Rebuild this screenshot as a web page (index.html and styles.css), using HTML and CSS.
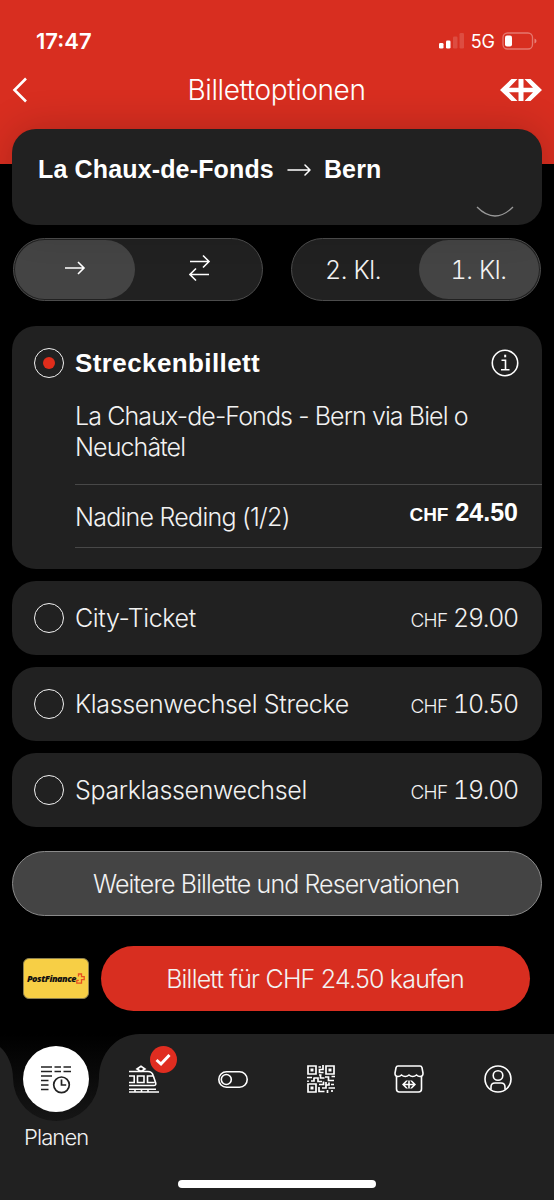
FILE: index.html
```html
<!DOCTYPE html>
<html lang="de">
<head>
    <meta charset="UTF-8">
    <meta name="viewport" content="width=device-width, initial-scale=1.0">
    <title>Billettoptionen</title>
    <link rel="stylesheet" href="styles.css">
</head>
<body>

<div class="screen">

    <header class="header">
        <div class="status">
            <span class="time">17:47</span>
            <div class="status-icons">
                <svg width="26" height="16" viewBox="0 0 26 16" fill="#fff">
                    <rect x="0" y="10" width="4.500" height="5.500" rx="1.300"/>
                    <rect x="7" y="7.500" width="4.500" height="8" rx="1.300"/>
                    <rect x="14" y="3.500" width="4.500" height="12" rx="1.300" opacity=".15"/>
                    <rect x="20.500" y="0" width="4.500" height="15.500" rx="1.300" opacity=".15"/>
                </svg>
                <span class="network">5G</span>
                <svg width="35" height="18" viewBox="0 0 35 18">
                    <rect x="1" y="1" width="29.500" height="16" rx="4.500" fill="none" stroke="#fff" stroke-opacity=".35" stroke-width="1.300"/>
                    <rect x="3" y="3.500" width="7" height="11" rx="2" fill="#fff"/>
                    <path d="M32.500 6.500q2 .8 2 2.500t-2 2.500z" fill="#fff" opacity=".4"/>
                </svg>
            </div>
        </div>
        <div class="titlebar">
            <svg class="back" width="16" height="26" viewBox="0 0 16 26" fill="none" stroke="#fff" stroke-width="2.600">
                <path d="M15 1.500 3.500 13 15 24.500"/>
            </svg>
            <h1>Billettoptionen</h1>
            <svg width="42" height="22" viewBox="0 0 42 22" fill="#fff">
                <path d="M0 11 11.500 0h6l-8.500 8.700h9.500V0h5v8.700H33L24.500 0h6L42 11 30.500 22h-6l8.500-8.700h-9.500V22h-5v-8.700H9L17.500 22h-6z"/>
            </svg>
        </div>
    </header>

    <div class="route">
        <b>La Chaux-de-Fonds</b>
        <svg width="24" height="12" viewBox="0 0 24 12" fill="none" stroke="#fff" stroke-width="1.500" stroke-linecap="round" stroke-linejoin="round">
            <path d="M1 6h22M18 1l5 5-5 5"/>
        </svg>
        <b>Bern</b>
        <svg class="scrolled-icon" width="40" height="12" viewBox="0 0 40 12" fill="none" stroke="#999" stroke-width="1.300">
            <path d="M2 1q18 18 36 0"/>
        </svg>
    </div>

    <div class="switches">
        <div class="switch">
            <div class="option selected">
                <svg width="22" height="14" viewBox="0 0 22 14" class="line-icon">
                    <path d="M1 7h19M14 1l6 6-6 6"/>
                </svg>
            </div>
            <div class="option return">
                <svg width="22" height="28" viewBox="0 0 22 28" class="line-icon">
                    <path d="M1 7.500h19M14 1.500l6 6-6 6M20 20.500H1M7 14.500l-6 6 6 6"/>
                </svg>
            </div>
        </div>
        <div class="switch">
            <div class="option">2. Kl.</div>
            <div class="option selected">1. Kl.</div>
        </div>
    </div>

    <main class="tickets">
        <section class="ticket open">
            <div class="ticket-head">
                <span class="radio checked"></span>
                <h2>Streckenbillett</h2>
                <svg class="info" width="28" height="28" viewBox="0 0 28 28" fill="none" stroke="#fff" stroke-width="1.600">
                    <circle cx="14" cy="14" r="12.700"/>
                    <path d="M10.500 11.300h4v9.200M10 20.700h8.500"/>
                    <path d="M14.200 5.700v2.600" stroke-width="2"/>
                </svg>
            </div>
            <p>La Chaux-de-Fonds - Bern via Biel o<br>Neuchâtel</p>
            <div class="traveller">
                <span class="person">Nadine Reding (1/2)</span>
                <span class="price"><small>CHF</small> 24.50</span>
            </div>
        </section>

        <section class="ticket">
            <span class="radio"></span>
            <span class="name">City-Ticket</span>
            <span class="price"><small>CHF</small> 29.00</span>
        </section>
        <section class="ticket">
            <span class="radio"></span>
            <span class="name">Klassenwechsel Strecke</span>
            <span class="price"><small>CHF</small> 10.50</span>
        </section>
        <section class="ticket">
            <span class="radio"></span>
            <span class="name">Sparklassenwechsel</span>
            <span class="price"><small>CHF</small> 19.00</span>
        </section>
    </main>

    <button class="more">Weitere Billette und Reservationen</button>

    <div class="pay">
        <div class="card-logo">
            <span>PostFinance</span>
            <svg width="9" height="11" viewBox="0 0 9 11" fill="none" stroke="#e8501f" stroke-width="1.300">
                <path d="M2.500 3.500V1h3v2.700h2.700v3H5.500v3.500H.8V7.300h2"/>
            </svg>
        </div>
        <button class="buy">Billett für CHF 24.50 kaufen</button>
    </div>

    <nav class="tabbar">
        <svg class="tabbar-shape" width="554" height="166" viewBox="0 0 554 166">
            <defs>
                <linearGradient id="notch" x1="0" y1="0" x2="0" y2="1">
                    <stop offset="0" stop-color="#000"/>
                    <stop offset=".45" stop-color="#090909"/>
                    <stop offset="1" stop-color="#161616"/>
                </linearGradient>
            </defs>
            <path fill="url(#notch)" d="M0 0h140v87H0z"/>
            <path fill="#212121" d="M0 13C8 20 13 32 13 44a43 43 0 0 0 86 0C99 20 116 0 140 0h414v166H0z"/>
        </svg>
        <div class="tabs">
            <a class="tab active">
                <span class="bubble">
                    <svg width="30" height="29" viewBox="0 0 30 29" fill="none" stroke="#222" stroke-width="1.700">
                        <path d="M0 2h11M13.500 2h6.500M22.500 2h7.500M0 6.500h11M13.500 6.500h6.500M22.500 6.500h7.500M0 11h11M0 15.500h7.500M0 20h7.500M0 24.500h7.500"/>
                        <circle cx="20.500" cy="19.800" r="7.800"/>
                        <path d="M20.500 14.500v5.500h4.700"/>
                    </svg>
                </span>
                <span class="label">Planen</span>
            </a>
            <a class="tab">
                <svg width="30" height="28" viewBox="0 0 30 28" class="line-icon">
                    <path d="M0 6.500h19q4 0 5.200 4l2.500 7.500q.6 2.500-2 2.500H0M0 11h5.200v6.500H0M8.500 11h6.500v6.500h-6.500zM25.500 17.500H18.500V11h6M8 4l4-2.700L16 4l-4 2.500zM0 24.300h27M0 27h30M6 24.300V27M12.500 24.300V27M19 24.300V27"/>
                </svg>
                <span class="badge">
                    <svg width="16" height="14" viewBox="0 0 16 14" fill="none" stroke="#fff" stroke-width="3">
                        <path d="M1.500 7 6 11 14.500 2"/>
                    </svg>
                </span>
            </a>
            <a class="tab">
                <svg width="30" height="17" viewBox="0 0 30 17" class="line-icon">
                    <rect x=".8" y=".8" width="28.400" height="15.400" rx="7.700"/>
                    <circle cx="8.300" cy="8.500" r="5"/>
                </svg>
            </a>
            <a class="tab">
                <svg width="28" height="28" viewBox="0 0 28 28" fill="none" stroke="#fff" stroke-width="1.700">
                    <path d="M1 1h8v8H1zM19 1h8v8h-8zM1 19h8v8H1z"/>
                    <path d="M3.500 5h3M21.500 5h3M3.500 23h3" stroke-width="3"/>
                    <path d="M11.500 2h2.500M16 0v4.500h-3.500v3h4M12 10h2.500M0 12.500h5M1 15.500V17M7 12.500v3.500H4M7 13h4v3.500h4M13.500 10v3h4M18 12h3.500v3.500H27M24.500 11.500H28M12 19.500h4.500v-3M19 17v3h3v-2.500M12 22v4.500h5.500M15 23h4v-3M21.500 23H28M20.500 25v3M24 19.500h3M25 27v-2"/>
                </svg>
            </a>
            <a class="tab">
                <svg width="30" height="28" viewBox="0 0 30 28" class="line-icon">
                    <path d="M4 1h22q1.500 0 2 1.800L29 8q.2 3.500-3 3.500-2 0-3.500-1.500-1.800 1.500-3.800 1.500T15 10q-1.700 1.500-3.700 1.500T7.500 10Q6 11.500 4 11.500.8 11.500 1 8l1-5.200Q2.500 1 4 1zM2.500 11.500V24q0 3 3 3h19q3 0 3-3V11.500"/>
                    <path fill="#fff" stroke="none" d="M8 19.500 12 15.500h2l-3 3.200h3.200v-3.200h1.600v3.200H19l-3-3.200h2l4 4-4 4h-2l3-3.200h-3.200v3.200h-1.600v-3.200H11l3 3.200h-2z"/>
                </svg>
            </a>
            <a class="tab">
                <svg width="28" height="28" viewBox="0 0 28 28" class="line-icon">
                    <circle cx="14" cy="14" r="13"/>
                    <circle cx="14" cy="10.500" r="4.800"/>
                    <path d="M7 24.500V22q0-4 4-4h6q4 0 4 4v2.500"/>
                </svg>
            </a>
        </div>
        <span class="home-indicator"></span>
    </nav>

</div>

</body>
</html>
```
FILE: styles.css
```css
* {
    box-sizing: border-box;
}

body {
    margin: 0;
    background-color: #000;
    color: #f2f2f2;
    font-family: Inter, "Liberation Sans", sans-serif;
    font-size: 25px;
    font-weight: 300;
    letter-spacing: -0.9px;
}

.screen {
    display: flex;
    flex-direction: column;
    width: 554px;
    height: 1200px;
    overflow: hidden;
}

/* header */

.header {
    height: 164px;
    flex-shrink: 0;
    background-color: #d82e20;
    color: #fff;
}

.status {
    display: flex;
    justify-content: space-between;
    align-items: center;
    height: 64px;
    padding: 18px 17px 0 36px;
    letter-spacing: 0;
}

.time {
    font-size: 22px;
    font-weight: 600;
}

.status-icons {
    display: flex;
    align-items: center;
    gap: 7px;
}

.network {
    margin-left: -1px;
    font-size: 18px;
    font-weight: 400;
}

.titlebar {
    display: flex;
    justify-content: space-between;
    align-items: center;
    height: 52px;
    padding: 0 12px 0 11px;
}

.back {
    margin-right: 26px;
}

h1 {
    margin: 0;
    font-size: 28px;
    font-weight: 300;
    letter-spacing: -0.4px;
}

.route {
    position: relative;
    display: flex;
    align-items: center;
    gap: 13px;
    flex-shrink: 0;
    height: 96px;
    margin: -35px 12px 0;
    padding: 0 26px 15px;
    border-radius: 24px;
    background-color: #212121;
    box-shadow: 0 0 40px rgba(0, 0, 0, 0.2);
    color: #fff;
    font-family: "Liberation Sans", Arial, sans-serif;
    letter-spacing: 0.15px;
}

.route b {
    font-weight: bold;
}

.scrolled-icon {
    position: absolute;
    right: 27px;
    bottom: 7px;
}

.line-icon {
    fill: none;
    stroke: #fff;
    stroke-width: 1.6;
}

/* direction and class */

.switches {
    display: flex;
    justify-content: space-between;
    margin: 13px 13px 0;
    letter-spacing: -0.4px;
    font-variant-numeric: tabular-nums;
}

.switch {
    display: flex;
    width: 250px;
    height: 63px;
    padding: 1px;
    border: 1px solid #4c4c4c;
    border-radius: 32px;
    background-color: #212121;
}

.option {
    display: flex;
    flex: 1;
    justify-content: center;
    align-items: center;
    padding-right: 6px;
    border-radius: 30px;
}

.option.selected {
    flex: none;
    width: 120px;
    padding-right: 1px;
    background-color: #444;
}

.option.return {
    padding: 0 0 0 4px;
}

.option svg {
    margin-bottom: 4px;
}

/* tickets */

.tickets {
    display: flex;
    flex-direction: column;
    gap: 12px;
    margin: 25px 12px 0;
}

.ticket {
    display: flex;
    align-items: center;
    height: 74px;
    padding: 0 24px 0 22px;
    border-radius: 24px;
    background-color: #212121;
}

.ticket.open {
    display: block;
    height: 243px;
    padding: 22px 0 0 22px;
}

.ticket-head {
    display: flex;
    align-items: center;
    height: 30px;
    padding-right: 23px;
}

.radio {
    display: flex;
    justify-content: center;
    align-items: center;
    width: 30px;
    height: 30px;
    margin-right: 11px;
    border: 1.5px solid #f2f2f2;
    border-radius: 50%;
}

.radio.checked::after {
    content: "";
    width: 12px;
    height: 12px;
    border-radius: 50%;
    background-color: #e02d1b;
}

h2 {
    flex: 1;
    margin: 0;
    color: #fff;
    font-family: "Liberation Sans", Arial, sans-serif;
    font-size: 26px;
    font-weight: bold;
    letter-spacing: 0.4px;
}

.ticket p {
    margin: 23px 0 0 41px;
    line-height: 31px;
}

.traveller {
    display: flex;
    justify-content: space-between;
    height: 64px;
    margin: 21px 0 0 41px;
    padding: 0 24px 0 0;
    border-top: 1px solid #484848;
    border-bottom: 1px solid #484848;
    line-height: 64px;
}

.person {
    letter-spacing: -0.75px;
}

.name {
    flex: 1;
    letter-spacing: -0.35px;
}

.price {
    font-variant-numeric: tabular-nums;
    letter-spacing: -1.3px;
}

.price small {
    font-size: 19px;
    letter-spacing: -0.6px;
}

.traveller .price {
    color: #fff;
    font-family: "Liberation Sans", Arial, sans-serif;
    font-weight: bold;
    letter-spacing: 0;
    line-height: 54px;
}

.traveller small {
    letter-spacing: 0;
}

/* buttons */

button {
    border: none;
    border-radius: 33px;
    padding: 0;
    font: inherit;
    letter-spacing: inherit;
    color: #f2f2f2;
}

.more {
    flex-shrink: 0;
    height: 65px;
    margin: 24px 12px 0;
    padding-right: 2px;
    border: 1px solid #8a8a8a;
    background-color: #444;
}

.pay {
    display: flex;
    align-items: center;
    gap: 12px;
    margin: 30px 24px 0 23px;
}

.card-logo {
    display: flex;
    justify-content: center;
    align-items: center;
    width: 66px;
    height: 41px;
    border: 1px solid #8d8150;
    border-radius: 6px;
    background-color: #f7cf45;
    color: #111;
    font-family: "Open Sans", sans-serif;
    font-size: 9px;
    font-style: italic;
    font-weight: 800;
    letter-spacing: -0.45px;
}

.buy {
    flex: 1;
    height: 65px;
    padding-right: 1px;
    background-color: #d82e20;
    letter-spacing: -0.8px;
}

/* tab bar */

.tabbar {
    position: relative;
    flex-shrink: 0;
    height: 166px;
    margin-top: 23px;
}

.tabbar-shape {
    position: absolute;
    top: 0;
    left: 0;
}

.tabs {
    position: relative;
    display: flex;
    padding: 12px 12px 0;
}

.tab {
    position: relative;
    display: flex;
    flex-direction: column;
    align-items: center;
    justify-content: center;
    width: 88.4px;
    height: 66px;
}

.tab.active {
    justify-content: flex-start;
    height: 110px;
}

.bubble {
    display: flex;
    flex-shrink: 0;
    justify-content: center;
    align-items: center;
    width: 66px;
    height: 66px;
    border-radius: 50%;
    background-color: #fff;
}

.label {
    margin-top: 12px;
    font-size: 22px;
    line-height: 27px;
}

.badge {
    position: absolute;
    top: 0;
    right: 12px;
    display: flex;
    justify-content: center;
    align-items: center;
    width: 27px;
    height: 27px;
    border-radius: 50%;
    background-color: #e02d20;
}

.home-indicator {
    position: absolute;
    left: 178px;
    bottom: 12px;
    width: 198px;
    height: 8px;
    border-radius: 4px;
    background-color: #fff;
}
```
